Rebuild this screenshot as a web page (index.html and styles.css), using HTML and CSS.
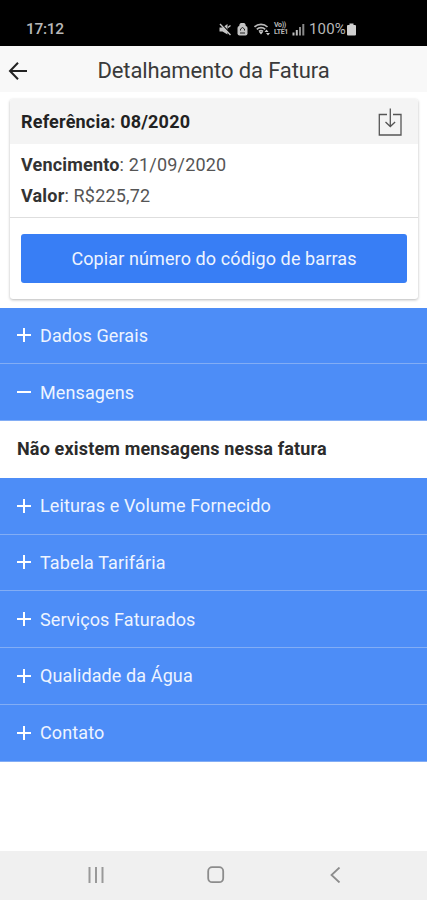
FILE: index.html
```html
<!DOCTYPE html>
<html lang="pt-BR">
<head>
  <meta charset="UTF-8">
  <meta name="viewport" content="width=device-width, initial-scale=1">
  <title>Detalhamento da Fatura</title>
  <link rel="stylesheet" href="styles.css">
</head>
<body>

  <!-- Barra de status -->
  <div class="status-bar">
    <span class="clock">17:12</span>
    <div class="status-icons">
      <svg width="12" height="13" viewBox="0 0 12 13">
        <path d="M0.500 4.500h3L8.500 1v10.500L3.500 8.500h-3z" fill="#c4c4c4"/>
        <path d="M1.500 0L11.500 10.500" stroke="#000" stroke-width="1.200"/>
        <path d="M1 1L11.500 12M9 4.500l2.500-2" stroke="#c4c4c4" stroke-width="1.400"/>
      </svg>
      <svg class="ic-lock" width="11" height="13" viewBox="0 0 11 13">
        <path d="M3 4V2.500a2.500 2 0 0 1 5 0V4" fill="#c4c4c4" stroke="#c4c4c4" stroke-width="1.500"/>
        <rect x="0.500" y="3" width="10" height="9.500" rx="2" fill="#c4c4c4"/>
        <path d="M3.500 7.500V6l2-1.500 2 1.500v1.500M3 10h5" fill="none" stroke="#222" stroke-width="1"/>
      </svg>
      <svg class="ic-wifi" width="16" height="13" viewBox="0 0 16 13">
        <path d="M0.500 4a9.500 9.500 0 0 1 13 0M2.800 6.300a6 6 0 0 1 8.400 0M5 8.500a3 3 0 0 1 4 0" fill="none" stroke="#bbb" stroke-width="1.700"/>
        <path d="M5 9h4l-2 2.500zM10.500 9l2-2.500 2 2.500zM12 10h4l-2 2.500z" fill="#ccc"/>
      </svg>
      <span class="volte"><span>Vo))</span><span>LTE1</span></span>
      <svg class="ic-signal" width="13" height="13" viewBox="0 0 13 13">
        <path d="M0.500 9.500h2v3h-2zM3.800 7h2v5.500h-2z" fill="#bbb"/>
        <path d="M7 4h2v8.500H7zM10.300 1h2v11.500h-2z" fill="#888"/>
      </svg>
      <span class="battery-level">100%</span>
      <svg class="ic-battery" width="9" height="13" viewBox="0 0 9 13">
        <path d="M2.500 0.500h4V2H8a1 1 0 0 1 1 1v8.500a1 1 0 0 1-1 1H1a1 1 0 0 1-1-1V3a1 1 0 0 1 1-1h1.500z" fill="#d0d0d0"/>
      </svg>
    </div>
  </div>

  <!-- Cabeçalho -->
  <header class="toolbar">
    <button class="back" aria-label="Voltar">
      <svg width="20" height="18" viewBox="0 0 20 18" fill="none" stroke="#222" stroke-width="2">
        <path d="M10 0.800L2 9l8 8.200M2 9h17"/>
      </svg>
    </button>
    <h1 class="title">Detalhamento da Fatura</h1>
  </header>

  <main class="content">
    <section class="card">
      <div class="card-header">
        <span class="reference">Referência: 08/2020</span>
        <svg width="24" height="28" viewBox="0 0 24 28" fill="none" stroke="#555" stroke-width="1.300">
          <path d="M9 6.500H1.300v20.500h21.700V6.500H15M12.300 0.500v18M7.500 14l4.800 4.500 4.800-4.500"/>
        </svg>
      </div>
      <div class="card-info">
        <p><b>Vencimento</b>: 21/09/2020</p>
        <p><b>Valor</b>: R$225,72</p>
      </div>
      <div class="card-action">
        <button class="copy">Copiar número do código de barras</button>
      </div>
    </section>

    <!-- Seções da fatura -->
    <div class="accordion">
      <button class="item"><span class="sign plus"></span><span>Dados Gerais</span></button>
      <button class="item"><span class="sign"></span><span>Mensagens</span></button>
      <div class="panel">Não existem mensagens nessa fatura</div>
      <button class="item"><span class="sign plus"></span><span>Leituras e Volume Fornecido</span></button>
      <button class="item"><span class="sign plus"></span><span>Tabela Tarifária</span></button>
      <button class="item"><span class="sign plus"></span><span>Serviços Faturados</span></button>
      <button class="item"><span class="sign plus"></span><span>Qualidade da Água</span></button>
      <button class="item"><span class="sign plus"></span><span>Contato</span></button>
    </div>
  </main>

  <!-- Navegação do Android -->
  <nav class="nav-bar">
    <svg width="18" height="16" viewBox="0 0 18 16" stroke="#999" stroke-width="2">
      <path d="M2.500 0v16M9 0v16M15.500 0v16"/>
    </svg>
    <svg width="18" height="18" viewBox="0 0 18 18" fill="none" stroke="#8c8c8c" stroke-width="1.800">
      <rect x="1.200" y="1.200" width="15" height="15" rx="4"/>
    </svg>
    <svg width="18" height="16" viewBox="0 0 18 16" fill="none" stroke="#8c8c8c" stroke-width="1.800">
      <path d="M12.500 0.500L4.500 8l8 7.500"/>
    </svg>
  </nav>

</body>
</html>
```

FILE: styles.css
```css
* { box-sizing: border-box; }

html, body {
  margin: 0;
  padding: 0;
  height: 100%;
}

body {
  display: flex;
  flex-direction: column;
  background: #fff;
  color: #222;
  font-family: Roboto, "Liberation Sans", sans-serif;
  font-size: 18px;
  overflow: hidden;
}

button {
  border: none;
  padding: 0;
  font: inherit;
  letter-spacing: 0.11px;
  cursor: pointer;
}

/* Barra de status */
.status-bar {
  flex: none;
  display: flex;
  justify-content: space-between;
  height: 46px;
  padding: 12px 71px 0 26px;
  background: #000;
  color: #b8b8b8;
  line-height: 34px;
}

.clock {
  font-size: 15.5px;
  font-weight: 500;
  letter-spacing: -0.3px;
}

.status-icons {
  display: flex;
  align-items: center;
  height: 34px;
}

.ic-lock { margin-left: 6px; }
.ic-wifi { margin-left: 6px; }

.volte {
  display: flex;
  flex-direction: column;
  width: 15px;
  margin-left: 4px;
  font-size: 7px;
  font-weight: bold;
  line-height: 7px;
  letter-spacing: -0.3px;
}

.ic-signal { margin-left: 3px; }

.battery-level {
  margin-left: 4px;
  font-size: 15px;
  letter-spacing: 0.2px;
}

.ic-battery { margin-left: 1px; }

/* Cabeçalho */
.toolbar {
  flex: none;
  display: grid;
  grid-template-columns: 36px 1fr 36px;
  align-items: center;
  height: 46px;
  padding-top: 4px;
  background: #f8f8f8;
}

.back {
  display: flex;
  padding-left: 8px;
  background: none;
}

.title {
  margin: 0;
  color: #3a3a3a;
  font-size: 22px;
  font-weight: 400;
  line-height: 30px;
  letter-spacing: -0.12px;
  text-align: center;
  white-space: nowrap;
}

.content {
  flex: 1;
}

/* Cartão */
.card {
  height: 200px;
  margin: 7px 9px 8.5px 10px;
  border-radius: 3px;
  background: #fff;
  box-shadow: 0 1px 3px rgba(0, 0, 0, 0.28);
  overflow: hidden;
}

.card-header {
  display: flex;
  align-items: center;
  justify-content: space-between;
  height: 45px;
  padding: 0 16px 0 11px;
  background: #f4f4f4;
}

.reference {
  font-weight: bold;
  letter-spacing: 0.2px;
}

.card-info {
  height: 74px;
  padding: 5px 11px;
  border-bottom: 1px solid #dedede;
  color: #555;
  letter-spacing: 0.18px;
}

.card-info p {
  margin: 0;
  line-height: 31px;
}

.card-info b {
  color: #333;
}

.card-action {
  padding: 16px 11px;
}

.copy {
  display: block;
  width: 100%;
  height: 49px;
  padding-bottom: 1px;
  border-radius: 3px;
  background: #387ef5;
  color: #eef4ff;
}

/* Seções */
.item,
.panel {
  display: flex;
  align-items: center;
  width: 100%;
  height: 56.75px;
}

.item {
  gap: 9px;
  padding-left: 17px;
  border-bottom: 1px solid #82adf5;
  background: #4d8df7;
  color: #eef4ff;
}

.sign {
  width: 14px;
  height: 14px;
  background: linear-gradient(#fff, #fff) center / 14px 2px no-repeat;
}

.sign.plus {
  background:
    linear-gradient(#fff, #fff) center / 14px 2px no-repeat,
    linear-gradient(#fff, #fff) center / 2px 14px no-repeat;
}

.panel {
  padding: 0 0 2px 17px;
  color: #2b2b2b;
  font-weight: bold;
  letter-spacing: 0.16px;
}

/* Navegação */
.nav-bar {
  flex: none;
  display: flex;
  align-items: center;
  justify-content: space-between;
  height: 49px;
  padding: 0 82px 1px 87px;
  background: #f0f0f0;
}
```
